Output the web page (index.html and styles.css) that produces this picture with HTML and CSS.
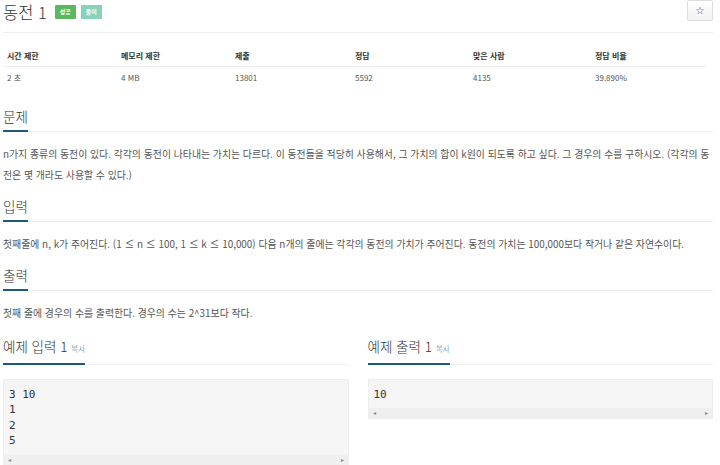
FILE: index.html
```html
<!DOCTYPE html>
<html lang="ko">
<head>
  <meta charset="UTF-8" />
  <meta name="viewport" content="width=device-width, initial-scale=1.0"/>
  <title>동전 1</title>
  <link rel="stylesheet" href="styles.css">
</head>
<body>
  <div class="page">

    <!-- problem title -->
    <div class="title-row">
      <h1 class="title">
        <span>동전 1</span>
        <span class="badge badge-ok">성공</span>
        <span class="badge badge-tag">풀이</span>
      </h1>
      <button class="star">☆</button>
    </div>

    <!-- limits / stats -->
    <div class="info">
      <div class="info-head">시간 제한</div>
      <div class="info-head">메모리 제한</div>
      <div class="info-head">제출</div>
      <div class="info-head">정답</div>
      <div class="info-head">맞은 사람</div>
      <div class="info-head">정답 비율</div>
      <div class="info-cell">2 초</div>
      <div class="info-cell">4 MB</div>
      <div class="info-cell">13801</div>
      <div class="info-cell">5592</div>
      <div class="info-cell">4135</div>
      <div class="info-cell">39.890%</div>
    </div>

    <section class="section">
      <h2 class="head"><span class="head-text">문제</span></h2>
      <p class="text">n가지 종류의 동전이 있다. 각각의 동전이 나타내는 가치는 다르다. 이 동전들을 적당히 사용해서, 그 가치의 합이 k원이 되도록 하고 싶다. 그 경우의 수를 구하시오. (각각의 동전은 몇 개라도 사용할 수 있다.)</p>
    </section>

    <section class="section">
      <h2 class="head"><span class="head-text">입력</span></h2>
      <p class="text">첫째줄에 n, k가 주어진다. (1 ≤ n ≤ 100, 1 ≤ k ≤ 10,000) 다음 n개의 줄에는 각각의 동전의 가치가 주어진다. 동전의 가치는 100,000보다 작거나 같은 자연수이다.</p>
    </section>

    <section class="section">
      <h2 class="head"><span class="head-text">출력</span></h2>
      <p class="text">첫째 줄에 경우의 수를 출력한다. 경우의 수는 2^31보다 작다.</p>
    </section>

    <!-- sample io -->
    <div class="samples">
      <section class="sample">
        <h2 class="head"><span class="head-text">예제 입력 1 <a class="copy">복사</a></span></h2>
        <div class="code">
          <pre>3 10
1
2
5</pre>
          <div class="scroll"><span>◂</span><span>▸</span></div>
        </div>
      </section>
      <section class="sample">
        <h2 class="head"><span class="head-text">예제 출력 1 <a class="copy">복사</a></span></h2>
        <div class="code">
          <pre>10</pre>
          <div class="scroll"><span>◂</span><span>▸</span></div>
        </div>
      </section>
    </div>

  </div>
</body>
</html>
```

FILE: styles.css
```css
body {
  margin: 0;
  font-family: "Noto Sans CJK KR", "Noto Sans", sans-serif;
  color: #555;
  background: #fff;
}
.page {
  width: 710px;
  margin-left: 3px;
}
.title-row {
  display: flex;
  justify-content: space-between;
  align-items: flex-start;
  border-bottom: 1px solid #eee;
  height: 32px;
}
.title {
  margin: 0;
  padding-top: 1px;
  display: flex;
  align-items: center;
  gap: 5px;
  font-size: 16.5px;
  line-height: 22px;
  font-weight: 300;
  color: #333;
}
.title span:first-child {
  margin-right: 3px;
}
.badge {
  display: inline-block;
  width: 21px;
  height: 14px;
  line-height: 14px;
  text-align: center;
  font-size: 6px;
  font-weight: 700;
  color: #fff;
  border-radius: 1px;
}
.badge-ok {
  background: #5cb85c;
}
.badge-tag {
  background: #85d3bb;
}
.star {
  width: 26px;
  height: 21px;
  padding: 0;
  font-size: 10px;
  color: #333;
  background: linear-gradient(#fff, #f2f2f2);
  border: 1px solid #ddd;
  border-radius: 2px;
  font-family: "DejaVu Sans", sans-serif;
}

.info {
  display: grid;
  grid-template-columns: 114px 114px 120px 118px 122px 115px;
  margin-top: 12px;
  font-size: 8px;
}
.info-head,
.info-cell {
  padding: 0 4px;
  height: 21px;
  line-height: 21px;
}
.info-head {
  font-weight: 700;
  color: #333;
  border-bottom: 1px solid #eee;
}
.info-cell {
  color: #555;
}

.section {
  margin-top: 18px;
}
.section + .section {
  margin-top: 10px;
}
.head {
  margin: 0;
  display: flex;
  border-bottom: 1px solid #eee;
  font-size: 13.5px;
  line-height: 20px;
  font-weight: 300;
  color: #333;
}
.head-text {
  padding-bottom: 4px;
  border-bottom: 2px solid #1b5c7e;
  margin-bottom: -1px;
}
.copy {
  font-size: 7.5px;
  color: #2f6fa5;
}
.text {
  margin: 12px 0 0;
  font-size: 9.9px;
  line-height: 21px;
  color: #555;
}

.samples {
  display: grid;
  grid-template-columns: 1fr 1fr;
  gap: 19px;
  margin-top: 12px;
}
.code {
  margin-top: 14px;
  background: #f5f5f5;
  border: 1px solid #eee;
}
.code pre {
  margin: 0;
  padding: 7px 5px 6px;
  font-family: "DejaVu Sans Mono", monospace;
  font-size: 11px;
  line-height: 15.4px;
  color: #333;
}
.scroll {
  display: flex;
  justify-content: space-between;
  height: 10px;
  padding: 0 4px;
  background: #efefef;
  font-size: 6px;
  line-height: 10px;
  color: #888;
}
```
